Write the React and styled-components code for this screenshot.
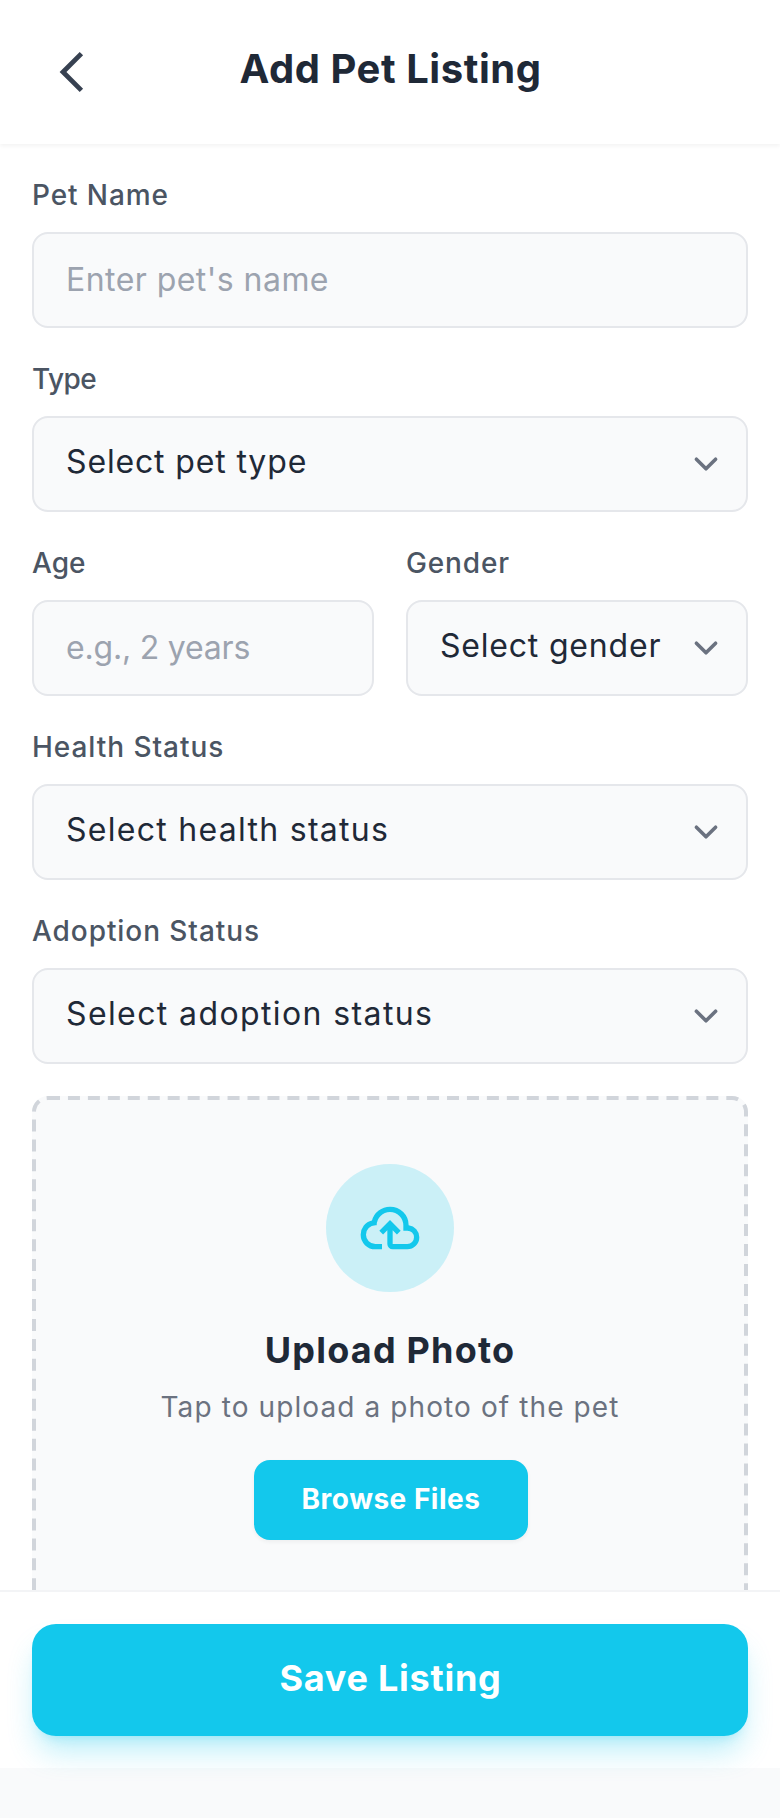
import React from "react";
import styled, { createGlobalStyle, css } from "styled-components";

const GlobalStyle = createGlobalStyle`
  *, *::before, *::after { box-sizing: border-box; }
  body {
    margin: 0;
    background: #f9fafb;
    font-family: Inter, "Liberation Sans", sans-serif;
    color: #1f2937;
  }
  button, input, select { font-family: inherit; margin: 0; }
`;

const Screen = styled.div`
  display: flex;
  flex-direction: column;
  height: 1818px;
  padding-bottom: 50px;
  background: #f9fafb;
`;

const Header = styled.header`
  display: flex;
  align-items: center;
  flex: none;
  height: 144px;
  padding: 32px;
  background: #fff;
  box-shadow: 0 2px 4px rgba(0, 0, 0, 0.05);
  z-index: 1;
`;

const BackButton = styled.button`
  display: flex;
  width: 80px;
  height: 80px;
  padding: 16px;
  border: 0;
  background: none;
  color: #374151;
`;

const Title = styled.h1`
  flex: 1;
  margin: 0;
  padding: 0 79px 7px 0;
  font-size: 40px;
  font-weight: 700;
  line-height: 50px;
  letter-spacing: 0.55px;
  text-align: center;
`;

const Form = styled.main`
  display: flex;
  flex-direction: column;
  gap: 32px;
  flex: 1;
  min-height: 0;
  overflow: hidden;
  padding: 32px 32px 0;
  background: #fff;
`;

const Row = styled.div`
  display: grid;
  grid-template-columns: 1fr 1fr;
  gap: 32px;
`;

const FieldGroup = styled.label`
  display: flex;
  flex-direction: column;
  gap: 16px;
  min-width: 0;
`;

const LabelText = styled.span`
  padding-bottom: 2px;
  font-size: 28px;
  font-weight: 500;
  line-height: 38px;
  letter-spacing: ${(p) => p.$track}px;
  color: #4b5563;
`;

const control = css`
  width: 100%;
  height: 96px;
  border: 2px solid #e5e7eb;
  border-radius: 16px;
  background-color: #f9fafb;
  font-size: 32px;
  letter-spacing: ${(p) => p.$track}px;
  color: #1f2937;
  outline: none;
`;

const Input = styled.input`
  ${control}
  padding: 0 32px 2px;
  &::placeholder { color: #9ca3af; opacity: 1; }
`;

const SelectBox = styled.div`
  display: grid;
  align-items: center;
  > * { grid-area: 1 / 1; }
`;

const Select = styled.select`
  ${control}
  appearance: none;
  padding: 0 74px 5px 32px;
`;

const Chevron = styled.svg`
  justify-self: end;
  width: 48px;
  height: 48px;
  margin-right: 18px;
  color: #6b7280;
  pointer-events: none;
`;

/* The dashed outline is drawn at half size and doubled, which gives long 12px dashes with 8px gaps. */
const UploadCard = styled.section`
  position: relative;
  display: flex;
  flex-direction: column;
  align-items: center;
  flex: none;
  height: 512px;
  padding-top: 68px;
  border-radius: 16px;
  background: #f9fafb;

  &::before {
    content: "";
    position: absolute;
    top: 0;
    left: 0;
    width: 50%;
    height: 50%;
    border: 2px dashed #d1d5db;
    border-radius: 8px;
    transform: scale(2);
    transform-origin: 0 0;
    pointer-events: none;
  }
`;

const IconCircle = styled.div`
  display: flex;
  align-items: center;
  justify-content: center;
  width: 128px;
  height: 128px;
  border-radius: 50%;
  background: rgba(19, 200, 236, 0.2);
  color: #13c8ec;
`;

const UploadTitle = styled.h2`
  margin: 32px 0 0;
  padding-bottom: 4px;
  font-size: 36px;
  font-weight: 700;
  line-height: 52px;
  letter-spacing: 1.2px;
`;

const UploadHint = styled.p`
  margin: 8px 0 32px;
  padding-bottom: 2px;
  font-size: 28px;
  line-height: 38px;
  letter-spacing: 1.1px;
  color: #6b7280;
`;

const Button = styled.button`
  border: 0;
  background: #13c8ec;
  color: #fff;
  font-weight: 700;
  white-space: nowrap;
`;

const BrowseButton = styled(Button)`
  width: 274px;
  height: 80px;
  margin-left: 2px;
  padding: 0 0 2px;
  border-radius: 16px;
  font-size: 28px;
  letter-spacing: 0.5px;
  box-shadow: 0 2px 4px rgba(0, 0, 0, 0.05);
`;

const Footer = styled.footer`
  flex: none;
  padding: 32px;
  border-top: 2px solid #f3f4f6;
  background: #fff;
`;

const SaveButton = styled(Button)`
  display: block;
  width: 100%;
  height: 112px;
  padding: 0 0 4px 1px;
  border-radius: 24px;
  font-size: 36px;
  letter-spacing: 0.75px;
  box-shadow: 0 20px 30px -6px rgba(19, 200, 236, 0.3),
    0 8px 12px -8px rgba(19, 200, 236, 0.3);
`;

function BackIcon() {
  return (
    <svg width="48" height="48" viewBox="0 0 48 48" fill="none">
      <path d="M33.4 5.6L15 24L33.4 42.4" stroke="currentColor" strokeWidth="4.8" />
    </svg>
  );
}

function CloudUploadIcon() {
  return (
    <svg width="64" height="64" viewBox="0 -960 960 960" fill="currentColor">
      <path d="M260-160q-91 0-155.500-63T40-377q0-78 47-139t123-78q25-92 100-149t170-57q117 0 198.500 81.500T760-520q69 8 114.500 59.500T920-340q0 75-52.500 127.500T740-160H520q-33 0-56.500-23.500T440-240v-206l-64 62-56-56 160-160 160 160-56 56-64-62v206h220q42 0 71-29t29-71q0-42-29-71t-71-29h-60v-80q0-83-58.500-141.500T480-720q-83 0-141.500 58.500T280-520h-20q-58 0-99 41t-41 99q0 58 41 99t99 41h100v80H260Z" />
    </svg>
  );
}

function TextField({ label, labelTrack, placeholder, track }) {
  return (
    <FieldGroup>
      <LabelText $track={labelTrack}>{label}</LabelText>
      <Input type="text" placeholder={placeholder} $track={track} />
    </FieldGroup>
  );
}

function SelectField({ label, labelTrack, placeholder, track }) {
  return (
    <FieldGroup>
      <LabelText $track={labelTrack}>{label}</LabelText>
      <SelectBox>
        <Select $track={track}>
          <option>{placeholder}</option>
        </Select>
        <Chevron viewBox="0 0 20 20" fill="none">
          <path
            d="M6 8l4 4 4-4"
            stroke="currentColor"
            strokeWidth="1.5"
            strokeLinecap="round"
            strokeLinejoin="round"
          />
        </Chevron>
      </SelectBox>
    </FieldGroup>
  );
}

export default function App() {
  return (
    <>
      <GlobalStyle />
      <Screen>
        <Header>
          <BackButton aria-label="Back">
            <BackIcon />
          </BackButton>
          <Title>Add Pet Listing</Title>
        </Header>
        <Form>
          <TextField label="Pet Name" labelTrack={0.9} placeholder="Enter pet's name" track={0.45} />
          <SelectField label="Type" labelTrack={-0.6} placeholder="Select pet type" track={0.85} />
          <Row>
            <TextField label="Age" labelTrack={0} placeholder="e.g., 2 years" track={-0.2} />
            <SelectField label="Gender" labelTrack={0.85} placeholder="Select gender" track={0.8} />
          </Row>
          <SelectField label="Health Status" labelTrack={0.95} placeholder="Select health status" track={1.28} />
          <SelectField label="Adoption Status" labelTrack={0.93} placeholder="Select adoption status" track={1.39} />
          <UploadCard>
            <IconCircle>
              <CloudUploadIcon />
            </IconCircle>
            <UploadTitle>Upload Photo</UploadTitle>
            <UploadHint>Tap to upload a photo of the pet</UploadHint>
            <BrowseButton>Browse Files</BrowseButton>
          </UploadCard>
        </Form>
        <Footer>
          <SaveButton>Save Listing</SaveButton>
        </Footer>
      </Screen>
    </>
  );
}
